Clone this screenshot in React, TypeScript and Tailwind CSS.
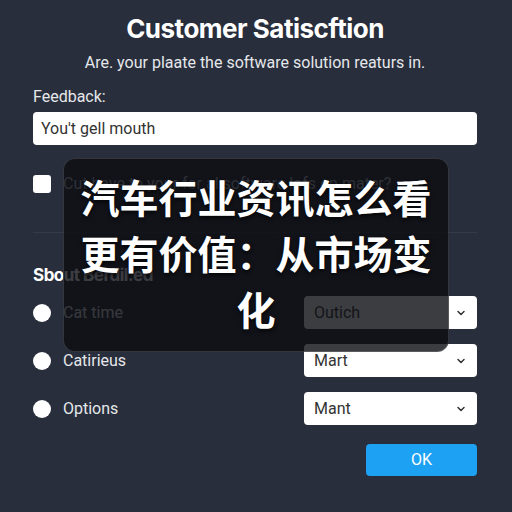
import React from "react";

function Chevron() {
  return (
    <svg width="12" height="12" viewBox="0 0 24 24" fill="none" stroke="#333" strokeWidth="3" strokeLinecap="round" strokeLinejoin="round">
      <path d="M6 9l6 6 6-6" />
    </svg>
  );
}

function Row({ label, value }: { label: string; value: string }) {
  return (
    <div className="flex items-center justify-between h-[33px]">
      <div className="flex items-center gap-[12px]">
        <span className="w-[18px] h-[18px] rounded-full bg-white" />
        <span className="text-[16px] leading-[20px] text-[#e5e7eb]">{label}</span>
      </div>
      <div className="w-[173px] h-[33px] bg-white rounded-[4px] flex items-center justify-between pl-[10px] pr-[10px]">
        <span className="text-[16px] leading-[20px] text-[#333]">{value}</span>
        <Chevron />
      </div>
    </div>
  );
}

export default function App() {
  return (
    <div
      className="relative w-[512px] h-[512px] overflow-hidden bg-[#282e3b] text-white"
      style={{ fontFamily: "Roboto, Inter, 'Noto Sans CJK SC', sans-serif" }}
    >
      <div className="flex flex-col pl-[33px] pr-[35px] pt-[13px]">
        <h1
          className="text-center text-[26px] leading-[32px] font-bold tracking-[-0.5px]"
          style={{ fontFamily: "Inter, Roboto, sans-serif" }}
        >
          Customer Satiscftion
        </h1>
        <p className="text-center text-[16px] leading-[20px] mt-[8px] text-[#e5e7eb]">Are. your plaate the software solution reaturs in.</p>
        <label className="text-[16px] leading-[20px] mt-[14px] text-[#e5e7eb]">Feedback:</label>
        <div className="mt-[5px] h-[33px] bg-white rounded-[4px] flex items-center px-[8px] text-[16px] leading-[20px] text-[#333]">You't gell mouth</div>
        <div className="mt-[29px] h-[20px] flex items-center gap-[12px]">
          <span className="w-[18px] h-[18px] rounded-[3px] bg-white" />
          <span className="text-[16px] leading-[20px] text-[#b8bcc6]">Cut have to your for al software lofs on mater?</span>
        </div>
        <div className="mt-[38px] h-px bg-[#333a48]" />
        <div
          className="mt-[32px] text-[17px] leading-[20px] font-bold tracking-[-0.5px]"
          style={{ fontFamily: "Inter, Roboto, sans-serif" }}
        >
          Sbout Berdil.ed
        </div>
        <div className="mt-[11px] flex flex-col gap-[15px]">
          <Row label="Cat time" value="Outich" />
          <Row label="Catirieus" value="Mart" />
          <Row label="Options" value="Mant" />
        </div>
        <div className="mt-[19px] flex justify-end">
          <button className="w-[111px] h-[32px] rounded-[4px] bg-[#1da1f2] text-white text-[16px] leading-[20px]">OK</button>
        </div>
      </div>

      <div className="absolute left-[63px] top-[158px] w-[386px] h-[194px] rounded-[12px] bg-[#0b0d11]/80 border border-white/15 flex items-center justify-center">
        <div
          className="text-center text-white font-bold text-[39px] leading-[56px] px-[14px] -mt-[6px]"
          style={{ fontFamily: "'Noto Sans CJK SC', sans-serif", textShadow: "0 2px 4px rgba(0,0,0,0.8)" }}
        >
          汽车行业资讯怎么看更有价值：从市场变化
        </div>
      </div>
    </div>
  );
}
